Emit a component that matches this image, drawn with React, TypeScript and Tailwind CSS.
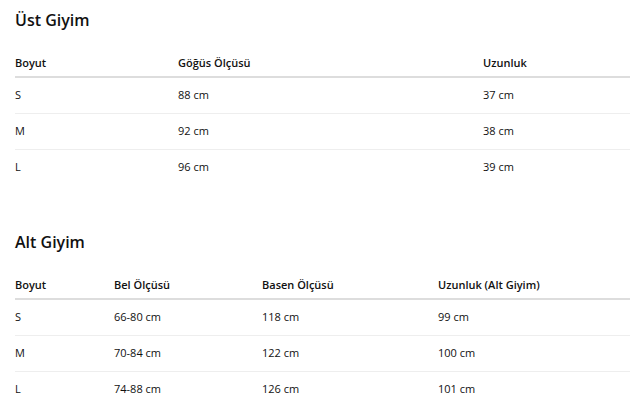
const ust = {
  cols: ["w-[163px]", "w-[305px]", "w-[147px]"],
  head: ["Boyut", "Göğüs Ölçüsü", "Uzunluk"],
  rows: [
    ["S", "88 cm", "37 cm"],
    ["M", "92 cm", "38 cm"],
    ["L", "96 cm", "39 cm"],
  ],
};

const alt = {
  cols: ["w-[99px]", "w-[148px]", "w-[176px]", "w-[192px]"],
  head: ["Boyut", "Bel Ölçüsü", "Basen Ölçüsü", "Uzunluk (Alt Giyim)"],
  rows: [
    ["S", "66-80 cm", "118 cm", "99 cm"],
    ["M", "70-84 cm", "122 cm", "100 cm"],
    ["L", "74-88 cm", "126 cm", "101 cm"],
  ],
};

type Data = typeof ust;

const SizeTable = ({ title, data, className }: { title: string; data: Data; className?: string }) => {
  return (
    <section className={className}>
      <h2 className="text-[16px] leading-[24px] font-semibold mb-[14px]">{title}</h2>
      <table className="table-fixed w-[615px] border-collapse text-[11px]">
        <colgroup>
          {data.cols.map((c, i) => (
            <col key={i} className={c} />
          ))}
        </colgroup>
        <thead>
          <tr className="border-b-2 border-[#dddddd]">
            {data.head.map((h) => (
              <th key={h} className="text-left font-semibold pt-[9px] pb-[5px] leading-[16px]">
                {h}
              </th>
            ))}
          </tr>
        </thead>
        <tbody>
          {data.rows.map((r, i) => (
            <tr key={i} className={i < data.rows.length - 1 ? "border-b border-[#eeeeee]" : ""}>
              {r.map((cell, j) => (
                <td key={j} className="pt-[9px] pb-[11px] leading-[15px]">
                  {cell}
                </td>
              ))}
            </tr>
          ))}
        </tbody>
      </table>
    </section>
  );
};

export default function App() {
  return (
    <div className="w-[633px] h-[412px] bg-white text-[#111] pl-[15px] pt-[8px]" style={{ fontFamily: '"Open Sans", sans-serif' }}>
      <SizeTable title="Üst Giyim" data={ust} />
      <SizeTable title="Alt Giyim" data={alt} className="mt-[45px]" />
    </div>
  );
}
